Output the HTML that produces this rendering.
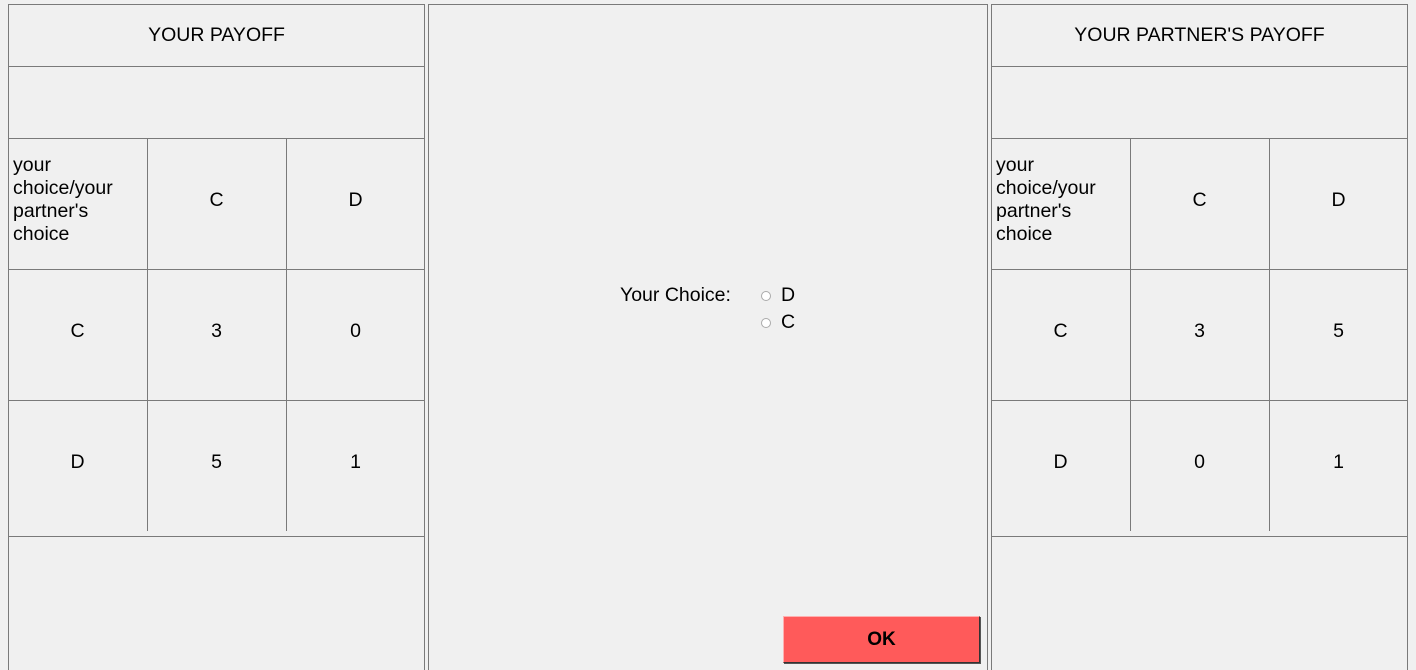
<!DOCTYPE html>
<html><head><style>
body{margin:0;width:1416px;height:670px;background:#f0f0f0;position:relative;overflow:hidden;font-family:"Liberation Sans",Arial,sans-serif;font-size:19.5px;color:#000}
.h{position:absolute;height:1px;background:#7a7a7a}
.v{position:absolute;width:1px;background:#7a7a7a}
.t{position:absolute;text-align:center;line-height:22px}
</style></head><body>
<!-- Left panel -->
<div class="h" style="left:8px;top:4px;width:417px"></div>
<div class="v" style="left:8px;top:4px;height:666px"></div>
<div class="v" style="left:424px;top:4px;height:666px"></div>
<div class="h" style="left:8px;top:66px;width:417px"></div>
<div class="h" style="left:8px;top:138px;width:417px"></div>
<div class="h" style="left:8px;top:269px;width:417px"></div>
<div class="h" style="left:8px;top:400px;width:417px"></div>
<div class="h" style="left:8px;top:536px;width:417px"></div>
<div class="v" style="left:147px;top:138px;height:393px"></div>
<div class="v" style="left:286px;top:138px;height:393px"></div>
<div class="t" style="left:8px;top:24px;width:417px">YOUR PAYOFF</div>
<div style="position:absolute;left:13px;top:154px;line-height:23px">your<br>choice/your<br>partner's<br>choice</div>
<div class="t" style="left:147px;top:189px;width:139px">C</div>
<div class="t" style="left:286px;top:189px;width:139px">D</div>
<div class="t" style="left:8px;top:320px;width:139px">C</div>
<div class="t" style="left:147px;top:320px;width:139px">3</div>
<div class="t" style="left:286px;top:320px;width:139px">0</div>
<div class="t" style="left:8px;top:451px;width:139px">D</div>
<div class="t" style="left:147px;top:451px;width:139px">5</div>
<div class="t" style="left:286px;top:451px;width:139px">1</div>
<!-- Middle panel -->
<div class="h" style="left:428px;top:4px;width:560px"></div>
<div class="v" style="left:428px;top:4px;height:666px"></div>
<div class="v" style="left:987px;top:4px;height:666px"></div>
<div style="position:absolute;left:620px;top:284px;line-height:22px">Your Choice:</div>
<div style="position:absolute;left:761px;top:291px;width:8px;height:8px;border-radius:50%;border:1px solid #aaa;background:#fff"></div>
<div style="position:absolute;left:781px;top:284px;line-height:22px">D</div>
<div style="position:absolute;left:761px;top:318px;width:8px;height:8px;border-radius:50%;border:1px solid #aaa;background:#fff"></div>
<div style="position:absolute;left:781px;top:311px;line-height:22px">C</div>
<div style="position:absolute;left:783px;top:616px;width:195px;height:45px;background:#ff5a5a;border:1px solid #333;border-top-color:#ffb0b0;border-left-color:#ffb0b0;box-shadow:1px 1px 0 #555;text-align:center;line-height:45px;font-weight:bold;font-size:19px">OK</div>
<!-- Right panel -->
<div class="h" style="left:991px;top:4px;width:417px"></div>
<div class="v" style="left:991px;top:4px;height:666px"></div>
<div class="v" style="left:1407px;top:4px;height:666px"></div>
<div class="h" style="left:991px;top:66px;width:417px"></div>
<div class="h" style="left:991px;top:138px;width:417px"></div>
<div class="h" style="left:991px;top:269px;width:417px"></div>
<div class="h" style="left:991px;top:400px;width:417px"></div>
<div class="h" style="left:991px;top:536px;width:417px"></div>
<div class="v" style="left:1130px;top:138px;height:393px"></div>
<div class="v" style="left:1269px;top:138px;height:393px"></div>
<div class="t" style="left:991px;top:24px;width:417px">YOUR PARTNER'S PAYOFF</div>
<div style="position:absolute;left:996px;top:154px;line-height:23px">your<br>choice/your<br>partner's<br>choice</div>
<div class="t" style="left:1130px;top:189px;width:139px">C</div>
<div class="t" style="left:1269px;top:189px;width:139px">D</div>
<div class="t" style="left:991px;top:320px;width:139px">C</div>
<div class="t" style="left:1130px;top:320px;width:139px">3</div>
<div class="t" style="left:1269px;top:320px;width:139px">5</div>
<div class="t" style="left:991px;top:451px;width:139px">D</div>
<div class="t" style="left:1130px;top:451px;width:139px">0</div>
<div class="t" style="left:1269px;top:451px;width:139px">1</div>
</body></html>
